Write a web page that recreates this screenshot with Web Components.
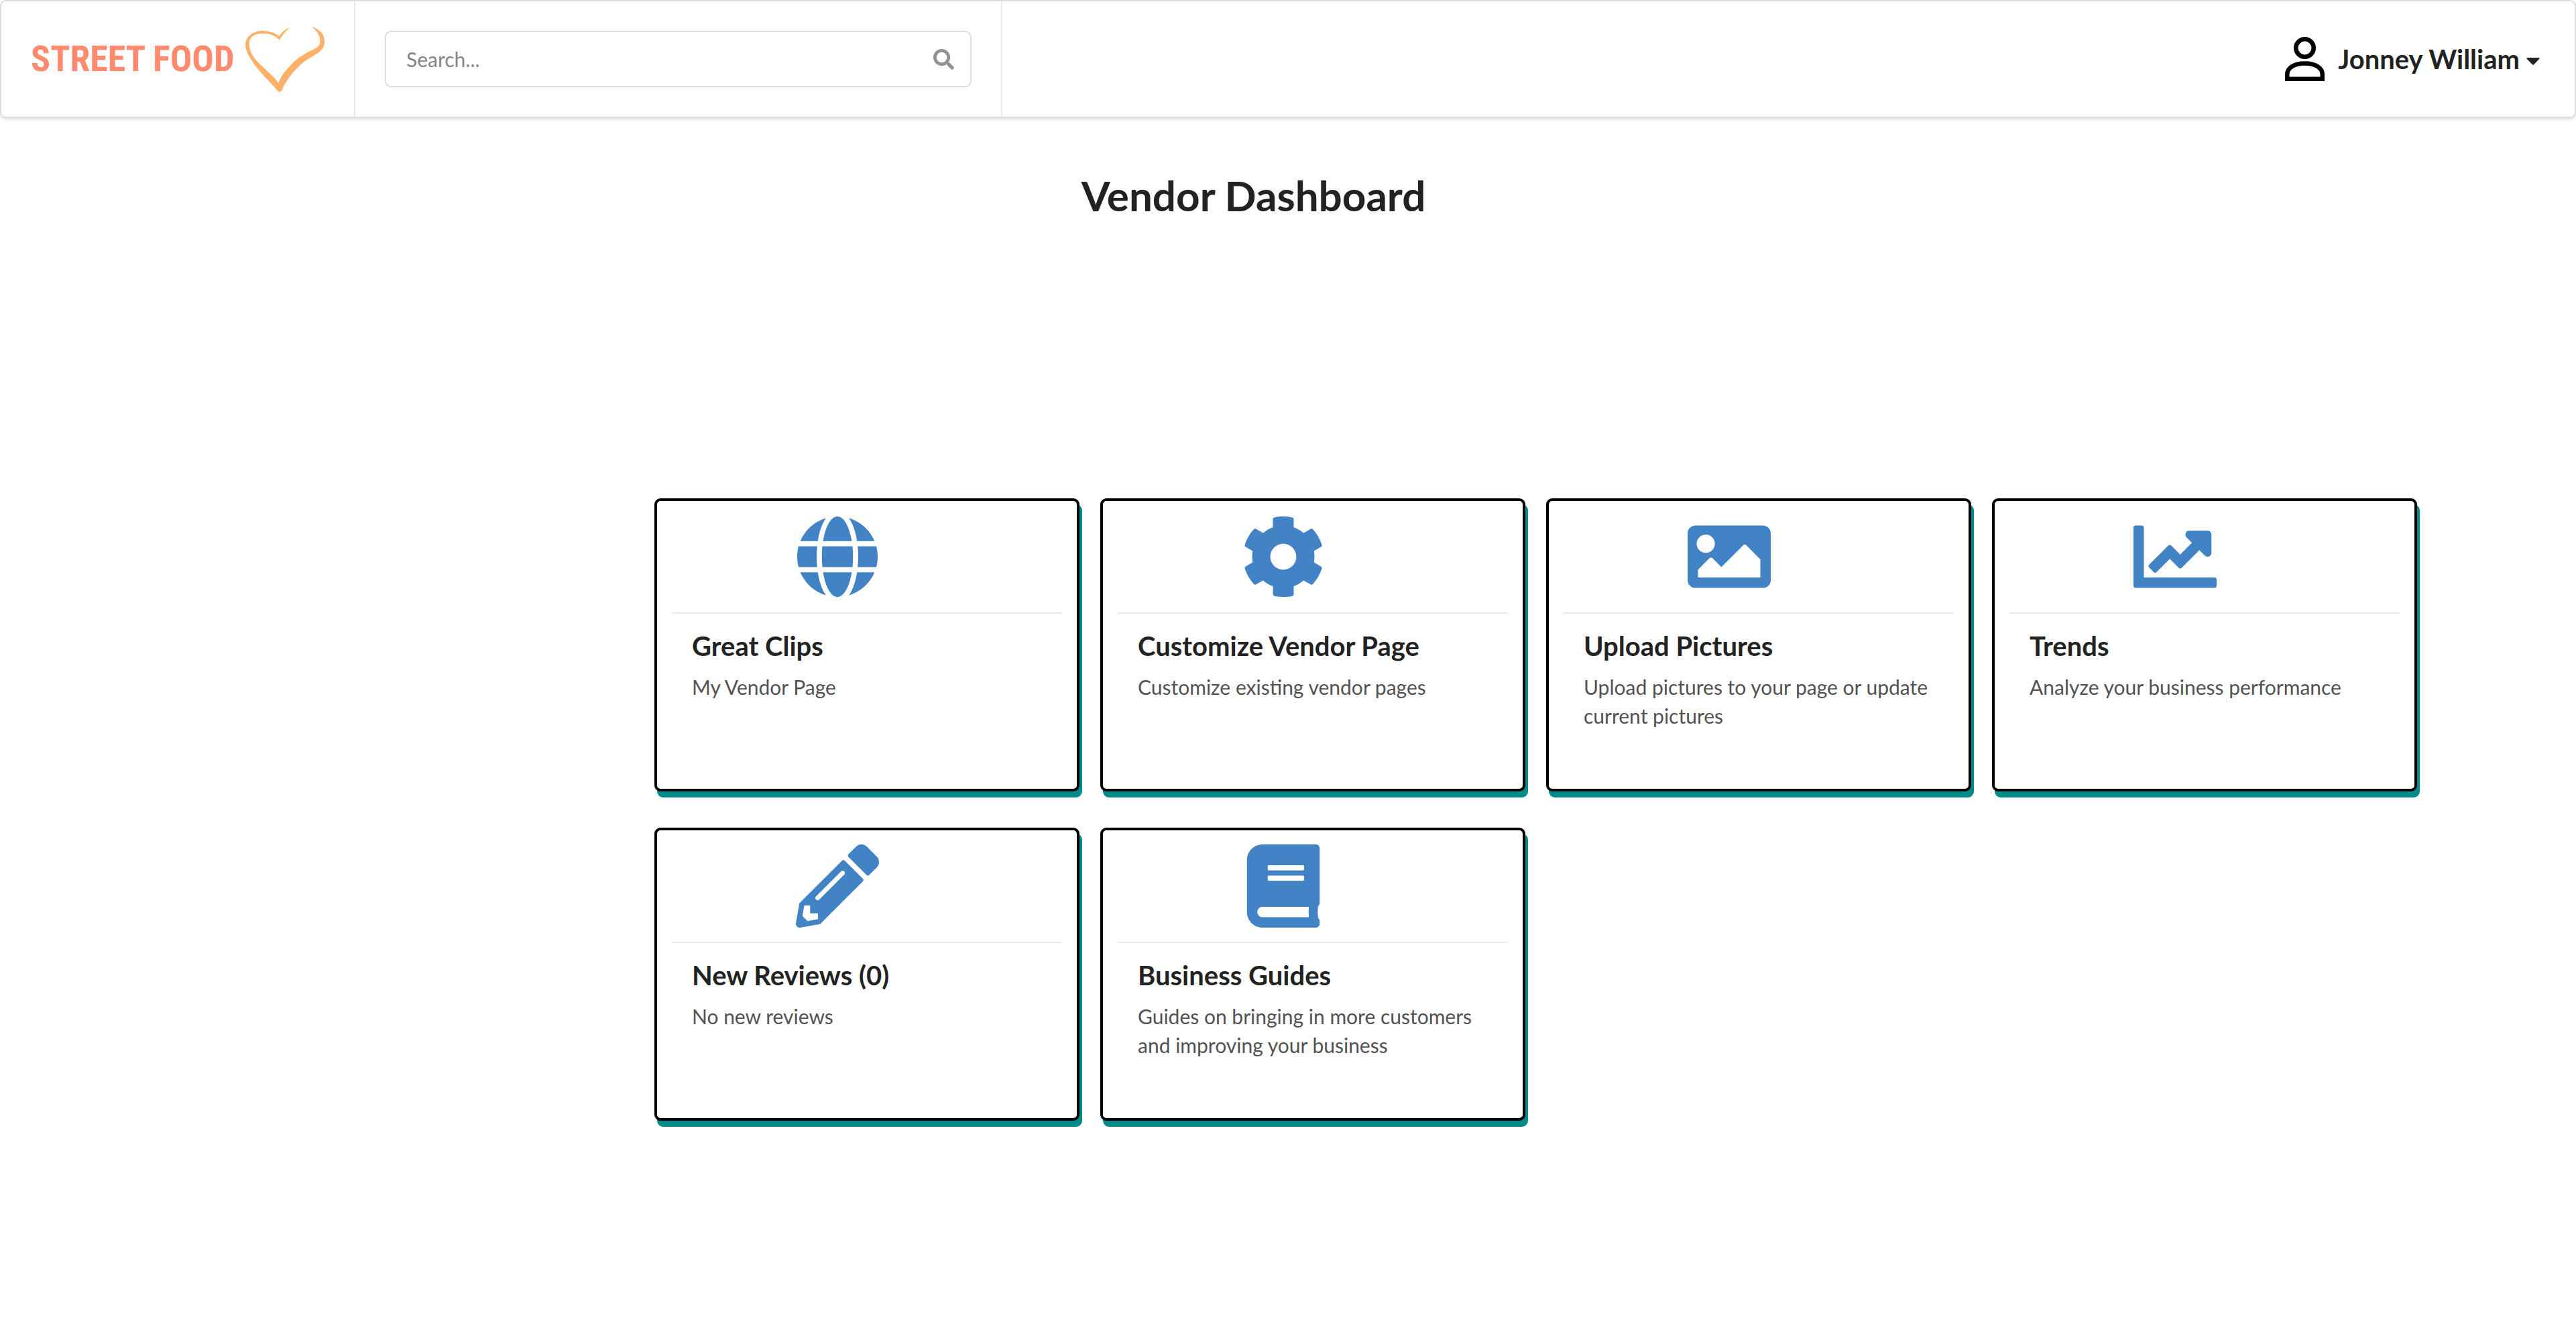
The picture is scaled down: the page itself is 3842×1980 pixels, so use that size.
<!DOCTYPE html>
<html lang="en">
<head>
<meta charset="utf-8">
<title>Vendor Dashboard</title>
<style>
  html { font-size: 30px; }
  body { margin: 0; background: #fff; color: #222; font-family: Lato, "Liberation Sans", sans-serif; }
</style>
</head>
<body>
<top-bar>
  <brand-logo slot="brand">STREET FOOD</brand-logo>
  <search-box slot="search"></search-box>
  <user-menu slot="account">Jonney William</user-menu>
</top-bar>
<vendor-dashboard>
  <span slot="heading">Vendor Dashboard</span>
  <action-card icon="globe"><span slot="title">Great Clips</span>My Vendor Page</action-card>
  <action-card icon="cog"><span slot="title">Customize Vendor Page</span>Customize existing vendor pages</action-card>
  <action-card icon="image"><span slot="title">Upload Pictures</span>Upload pictures to your page or update current pictures</action-card>
  <action-card icon="chart"><span slot="title">Trends</span>Analyze your business performance</action-card>
  <action-card icon="pencil"><span slot="title">New Reviews (0)</span>No new reviews</action-card>
  <action-card icon="book"><span slot="title">Business Guides</span>Guides on bringing in more customers and improving your business</action-card>
</vendor-dashboard>

<script>
const ICONS = {
  globe: [496, "M336.5 160C322 70.7 287.8 8 248 8s-74 62.7-88.5 152h177zM152 256c0 22.2 1.2 43.5 3.3 64h185.3c2.1-20.5 3.3-41.8 3.3-64s-1.2-43.5-3.3-64H155.3c-2.1 20.5-3.3 41.8-3.3 64zm324.7-96c-28.6-67.9-86.5-120.4-158-141.6 24.4 33.8 41.2 84.7 50 141.6h108zM177.2 18.4C105.8 39.6 47.8 92.1 19.3 160h108c8.7-56.9 25.5-107.8 49.9-141.6zM487.4 192H372.7c2.1 21 3.3 42.5 3.3 64s-1.2 43-3.3 64h114.6c5.5-20.5 8.6-41.8 8.6-64s-3.1-43.5-8.5-64zM120 256c0-21.5 1.2-43 3.3-64H8.6C3.2 212.5 0 233.8 0 256s3.2 43.5 8.6 64h114.6c-2-21-3.2-42.5-3.2-64zm39.5 96c14.5 89.3 48.7 152 88.5 152s74-62.7 88.5-152h-177zm159.3 141.6c71.4-21.2 129.4-73.7 158-141.6h-108c-8.8 56.9-25.6 107.8-50 141.6zM19.3 352c28.6 67.9 86.5 120.4 158 141.6-24.4-33.8-41.2-84.7-50-141.6h-108z"],
  cog: [512, "M487.4 315.7l-42.6-24.6c4.3-23.2 4.3-47 0-70.2l42.6-24.6c4.9-2.8 7.1-8.6 5.5-14-11.1-35.6-30-67.8-54.7-94.6-3.8-4.1-10-5.1-14.8-2.3L380.8 110c-17.9-15.4-38.5-27.3-60.8-35.1V25.8c0-5.6-3.9-10.5-9.4-11.7-36.7-8.2-74.3-7.8-109.2 0-5.5 1.2-9.4 6.1-9.4 11.7V75c-22.2 7.9-42.8 19.8-60.8 35.1L88.7 85.5c-4.9-2.8-11-1.9-14.8 2.3-24.7 26.7-43.6 58.9-54.7 94.6-1.7 5.4.6 11.2 5.5 14L67.3 221c-4.3 23.2-4.3 47 0 70.2l-42.6 24.6c-4.9 2.8-7.1 8.6-5.5 14 11.1 35.6 30 67.8 54.7 94.6 3.8 4.1 10 5.1 14.8 2.3l42.6-24.6c17.9 15.4 38.5 27.3 60.8 35.1v49.2c0 5.6 3.9 10.5 9.4 11.7 36.7 8.2 74.3 7.8 109.2 0 5.5-1.2 9.4-6.1 9.4-11.7v-49.2c22.2-7.9 42.8-19.8 60.8-35.1l42.6 24.6c4.9 2.8 11 1.9 14.8-2.3 24.7-26.7 43.6-58.9 54.7-94.6 1.5-5.5-.7-11.3-5.6-14.1zM256 336c-44.1 0-80-35.9-80-80s35.9-80 80-80 80 35.9 80 80-35.9 80-80 80z"],
  image: [512, "M464 448H48c-26.51 0-48-21.49-48-48V112c0-26.51 21.49-48 48-48h416c26.51 0 48 21.49 48 48v288c0 26.51-21.49 48-48 48zM112 120c-30.928 0-56 25.072-56 56s25.072 56 56 56 56-25.072 56-56-25.072-56-56-56zM64 384h384V272l-87.515-87.515c-4.686-4.686-12.284-4.686-16.971 0L208 320l-55.515-55.515c-4.686-4.686-12.284-4.686-16.971 0L64 336v48z"],
  chart: [512, "M500 384c6.6 0 12 5.4 12 12v40c0 6.6-5.4 12-12 12H12c-6.6 0-12-5.4-12-12V76c0-6.6 5.4-12 12-12h40c6.6 0 12 5.4 12 12v308h436zM456 96H344c-21.4 0-32.1 25.9-17 41l32.9 32.9-72 72.9-55.6-55.6c-4.7-4.7-12.2-4.7-16.9 0L96.4 305c-4.7 4.6-4.8 12.2-.2 16.9l28.5 29.4c4.7 4.8 12.4 4.9 17.1.1l82.1-82.1 55.5 55.5c4.7 4.7 12.3 4.7 17 0l109.2-109.2L439 249c15.1 15.1 41 4.4 41-17V120c0-13.3-10.7-24-24-24z"],
  pencil: [512, "M497.9 142.1l-46.1 46.1c-4.7 4.7-12.3 4.7-17 0l-111-111c-4.7-4.7-4.7-12.3 0-17l46.1-46.1c18.7-18.7 49.1-18.7 67.9 0l60.1 60.1c18.8 18.7 18.8 49.1 0 67.9zM284.2 99.8L21.6 362.4.4 483.9c-2.9 16.4 11.4 30.6 27.8 27.8l121.5-21.3 262.6-262.6c4.7-4.7 4.7-12.3 0-17l-111-111c-4.8-4.7-12.4-4.7-17.1 0zM124.1 339.9c-5.5-5.5-5.5-14.3 0-19.8l154-154c5.5-5.5 14.3-5.5 19.8 0s5.5 14.3 0 19.8l-154 154c-5.5 5.5-14.3 5.5-19.8 0zM88 424h48v36.3l-64.5 11.3-31.1-31.1L51.7 376H88v48z"],
  book: [448, "M448 360V24c0-13.3-10.7-24-24-24H96C43 0 0 43 0 96v320c0 53 43 96 96 96h328c13.3 0 24-10.7 24-24v-16c0-7.5-3.5-14.3-8.9-18.7-4.2-15.4-4.2-59.3 0-74.7 5.4-4.3 8.9-11.1 8.9-18.6zM128 134c0-3.3 2.7-6 6-6h212c3.3 0 6 2.7 6 6v20c0 3.3-2.7 6-6 6H134c-3.3 0-6-2.7-6-6v-20zm0 64c0-3.3 2.7-6 6-6h212c3.3 0 6 2.7 6 6v20c0 3.3-2.7 6-6 6H134c-3.3 0-6-2.7-6-6v-20zm253.4 250H96c-17.7 0-32-14.3-32-32 0-17.6 14.4-32 32-32h285.4c-1.9 17.1-1.9 46.9 0 64z"],
  search: [512, "M505 442.7L405.3 343c-4.5-4.5-10.6-7-17-7H372c27.6-35.3 44-79.7 44-128C416 93.1 322.9 0 208 0S0 93.1 0 208s93.1 208 208 208c48.3 0 92.7-16.4 128-44v16.3c0 6.4 2.5 12.5 7 17l99.7 99.7c9.4 9.4 24.6 9.4 33.9 0l28.3-28.3c9.4-9.4 9.4-24.6.1-34zM208 336c-70.7 0-128-57.2-128-128 0-70.7 57.2-128 128-128 70.7 0 128 57.2 128 128 0 70.7-57.2 128-128 128z"]
};
const svgIcon = (name) => {
  const [w, d] = ICONS[name];
  return `<svg viewBox="0 0 ${w} 512" aria-hidden="true"><path fill="currentColor" d="${d}"/></svg>`;
};

class BaseElement extends HTMLElement {
  constructor() {
    super();
    this.attachShadow({ mode: "open" });
  }
  connectedCallback() {
    this.shadowRoot.innerHTML = this.render();
  }
}

customElements.define("top-bar", class extends BaseElement {
  render() {
    return `<style>
      :host { display: block; }
      nav { display: flex; align-items: stretch; box-sizing: border-box; height: 176px; background: #fff;
            border: 2px solid #dededf; border-radius: 9px; box-shadow: 0 2px 4px rgba(34,36,38,.15); }
      .cell { display: flex; align-items: center; box-sizing: border-box; border-right: 2px solid #e8e9e9; padding: 0 44px; }
      .brand { width: 528px; }
      .search { width: 965px; }
      .account { margin-left: auto; border: 0; padding-right: 52px; }
      .brand ::slotted(*), .search ::slotted(*) { flex: 1; }
    </style>
    <nav>
      <div class="cell brand"><slot name="brand"></slot></div>
      <div class="cell search"><slot name="search"></slot></div>
      <div class="cell account"><slot name="account"></slot></div>
    </nav>`;
  }
});

customElements.define("brand-logo", class extends BaseElement {
  render() {
    return `<style>
      :host { display: block; }
      a { display: flex; align-items: center; justify-content: space-between; text-decoration: none; color: #ff8a6e; white-space: nowrap;
          font: bold 54px/70px "Liberation Sans Narrow", "Roboto Condensed", "DejaVu Sans Condensed", sans-serif; }
      svg { display: block; width: 118px; height: 98px; }
    </style>
    <a href="#"><span><slot></slot></span>
      <svg viewBox="0 0 118 98" aria-hidden="true"><path fill="#ffb16a" d="M67 2C60 7 55 13 51 21C44 13 35 11 26 11C13 11 5 17 5.500 27C6 39 13 48 21 56L40 74C45 79 48 82 49.500 85C52 76 58 68 65 61C72 53 78 48 86 43C96 36 108 34 110.500 27C113 20 111 10 98 0C111 5 118 12 118 22C118 34 111 38 105 42C98 47 92 49 84 56C72 66 58 85 55 95C54 98.500 48 99 47 95C38 84 20 68 10 52C4 43 0 36 0 27C1 14 13 7 26 7C36 7 44 10 50.500 15C54 9 60 4 67 2Z"/></svg>
    </a>`;
  }
});

customElements.define("search-box", class extends BaseElement {
  render() {
    return `<style>
      :host { display: block; }
      label { display: flex; align-items: center; box-sizing: border-box; height: 84px; padding: 0 24px 0 30px;
              border: 2px solid #dededf; border-radius: 9px; color: #929292; }
      input { flex: 1; min-width: 0; border: 0; padding: 0; outline: 0; background: none; font: 30px/43px Lato, "Liberation Sans", sans-serif; color: #222; }
      input::placeholder { color: #858585; opacity: 1; }
      svg { display: block; width: 31px; height: 31px; }
    </style>
    <label><input type="text" placeholder="Search..." aria-label="Search">${svgIcon("search")}</label>`;
  }
});

customElements.define("user-menu", class extends BaseElement {
  render() {
    return `<style>
      :host { display: block; }
      button { display: flex; align-items: center; border: 0; padding: 0; background: none; color: #222;
               font: bold 40px/50px Lato, "Liberation Sans", sans-serif; white-space: nowrap; }
      svg { display: block; }
      .person { width: 59px; height: 66px; margin-right: 20px; color: #000; }
      .caret { width: 20px; height: 11px; margin: 6px 0 0 10px; }
    </style>
    <button type="button" aria-haspopup="menu">
      <svg class="person" viewBox="0 0 59 66" aria-hidden="true" fill="none" stroke="currentColor" stroke-width="6.500"><circle cx="29.500" cy="16.500" r="13.250"/><path d="M3.250 62.750V56C3.250 46 14 39.500 29.500 39.500S55.750 46 55.750 56V62.750Z"/></svg>
      <span><slot></slot></span>
      <svg class="caret" viewBox="0 0 20 11" aria-hidden="true"><path fill="currentColor" d="M1.500 0H18.500Q20.500 .5 19 2L11.500 10Q10 11.500 8.500 10L1 2Q-.5 .5 1.500 0Z"/></svg>
    </button>`;
  }
});

customElements.define("vendor-dashboard", class extends BaseElement {
  render() {
    return `<style>
      :host { display: block; }
      h1 { margin: 0; padding: 76px 103px 0 0; text-align: center; font-size: 62px; line-height: 78px; font-weight: bold; }
      main { display: grid; grid-template-columns: 976fr 2629fr 237fr; padding: 413px 0 54px; }
      section { grid-column: 2; display: grid; grid-template-columns: repeat(4, minmax(0, 1fr)); gap: 54px 31px; }
    </style>
    <h1><slot name="heading"></slot></h1>
    <main><section><slot></slot></section></main>`;
  }
});

customElements.define("action-card", class extends BaseElement {
  render() {
    return `<style>
      :host { display: flex; }
      a { flex: 1; display: block; box-sizing: border-box; min-height: 437px; padding: 0 22px; background: #fff; color: inherit; text-decoration: none;
          border: 4px solid #000; border-radius: 9px; box-shadow: 4px 9px 0 darkcyan; }
      .icon { display: flex; justify-content: center; padding: 21px 88px 21px 0; border-bottom: 2px solid #e8e9e9; color: #4183c4; }
      svg { display: block; width: 124px; height: 124px; }
      .text { padding: 23px 30px; }
      h2 { margin: 0 0 15px; font-size: 40px; line-height: 50px; font-weight: bold; }
      p { margin: 0; font-size: 30px; line-height: 43px; color: #525252; }
    </style>
    <a href="#">
      <div class="icon">${svgIcon(this.getAttribute("icon"))}</div>
      <div class="text"><h2><slot name="title"></slot></h2><p><slot></slot></p></div>
    </a>`;
  }
});
</script>
</body>
</html>
